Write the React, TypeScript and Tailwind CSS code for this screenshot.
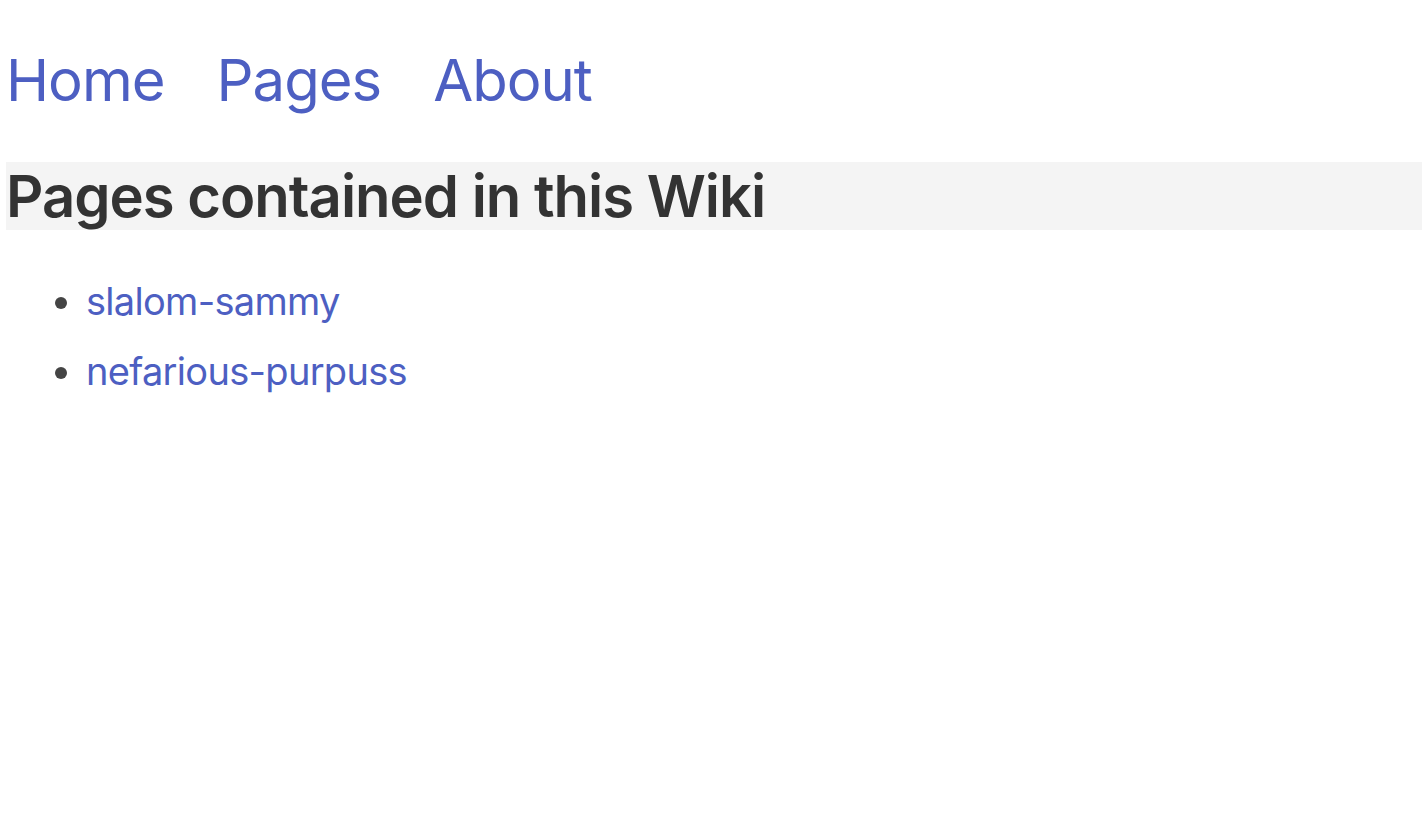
const links = ["Home", "Pages", "About"]
const pages = ["slalom-sammy", "nefarious-purpuss"]

export default function App() {
  return (
    <div className="min-h-screen bg-white pl-[6px] font-['Inter',sans-serif] text-[#333]">
      <nav className="flex gap-[52px] pt-[40px] h-[162px]">
        {links.map((l) => (
          <a key={l} href="#" className="text-[58px] leading-[80px] tracking-[-1px] text-[#4d5fc2]">
            {l}
          </a>
        ))}
      </nav>
      <h1 className="bg-[#f4f4f4] text-[58px] font-semibold leading-[68px] h-[68px] tracking-[-1px]">
        Pages contained in this Wiki
      </h1>
      <ul className="list-disc pl-[80px] mt-[36px] text-[38px] tracking-[-0.7px] marker:text-[#444]">
        {pages.map((p) => (
          <li key={p} className="leading-[70px]">
            <a href="#" className="text-[#4d5fc2]">
              {p}
            </a>
          </li>
        ))}
      </ul>
    </div>
  )
}
